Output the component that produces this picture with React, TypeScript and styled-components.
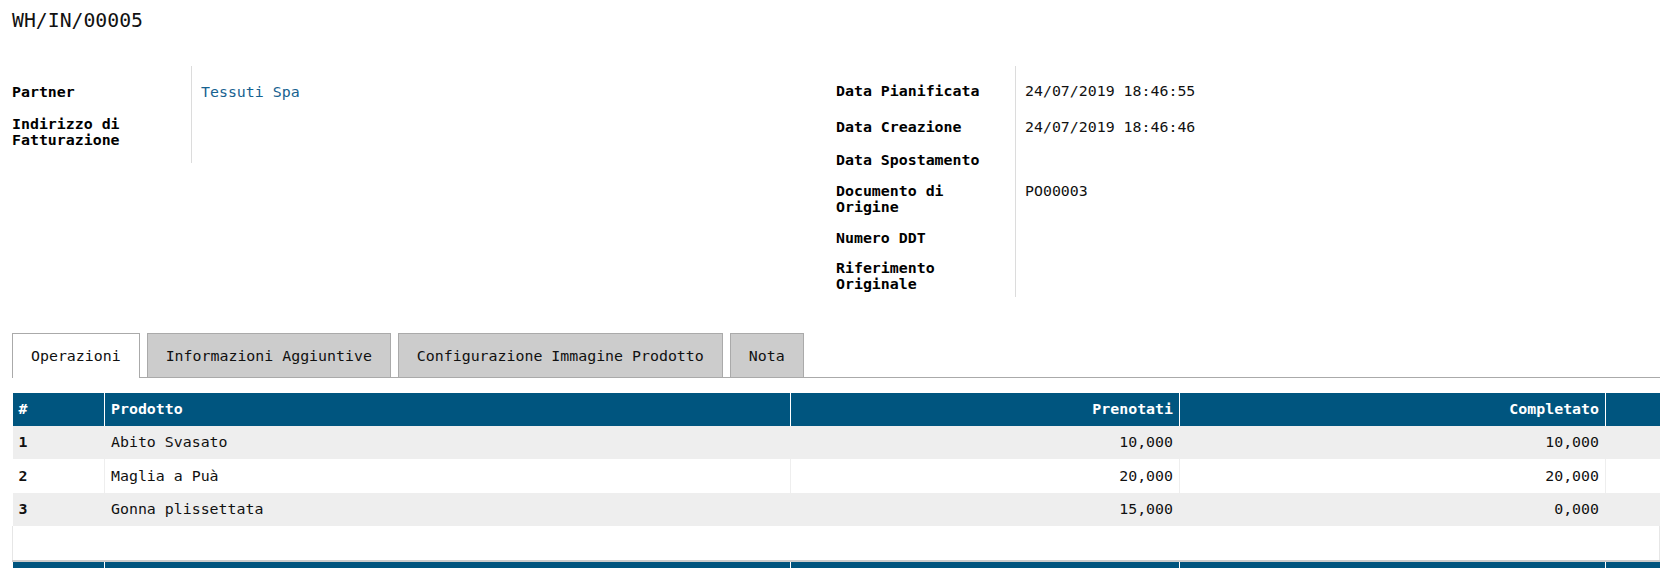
import React from "react";
import styled, { createGlobalStyle } from "styled-components";

const GlobalStyle = createGlobalStyle`
  html, body {
    margin: 0;
    padding: 0;
    overflow: hidden;
    background: #ffffff;
  }
  body {
    font-family: "DejaVu Sans Mono", "Liberation Mono", monospace;
    font-size: 14.9px;
    color: #111;
  }
`;

const Page = styled.div`
  padding: 9px 12px 0;
  width: 1648px;
`;

const Title = styled.h1`
  margin: 0;
  font-size: 19.8px;
  line-height: 24px;
  font-weight: normal;
  color: #111;
`;

const InfoGrid = styled.div`
  margin-top: 33px;
  display: grid;
  grid-template-columns: 1fr 1fr;
  align-items: start;
`;

const FieldGroup = styled.div`
  display: grid;
  grid-template-columns: 179px 1fr;
`;

const FieldLabel = styled.div<{ $pt: number; $pb?: number }>`
  padding-top: ${(p) => p.$pt}px;
  padding-bottom: ${(p) => p.$pb ?? 0}px;
  padding-right: 10px;
  line-height: 16px;
  font-weight: bold;
  color: #000;
`;

const FieldValue = styled.div<{ $pt: number; $pb?: number; $link?: boolean }>`
  padding-top: ${(p) => p.$pt}px;
  padding-bottom: ${(p) => p.$pb ?? 0}px;
  padding-left: 9px;
  border-left: 1px solid #dcdcdc;
  line-height: 16px;
  color: ${(p) => (p.$link ? "#176290" : "#111")};
`;

const TabBar = styled.div`
  margin-top: 36px;
  display: flex;
  align-items: flex-end;
  gap: 7px;
  border-bottom: 1px solid #aaaaaa;
`;

const Tab = styled.div<{ $active?: boolean }>`
  padding: 14px 18px ${(p) => (p.$active ? 13 : 12)}px;
  line-height: 17px;
  border: 1px solid #aaaaaa;
  border-bottom: none;
  margin-bottom: ${(p) => (p.$active ? -1 : 0)}px;
  background: ${(p) => (p.$active ? "#ffffff" : "#cccccc")};
  color: #111;
  white-space: nowrap;
`;

const Table = styled.table`
  margin-top: 15px;
  width: 1648px;
  table-layout: fixed;
  border-collapse: collapse;
`;

const HeadCell = styled.th<{ $right?: boolean }>`
  height: 33px;
  padding: 0 6px;
  background: #00557f;
  color: #ffffff;
  font-weight: bold;
  text-align: ${(p) => (p.$right ? "right" : "left")};
  border-left: 1px solid #ffffff;
  &:first-child {
    border-left: none;
  }
`;

const BodyRow = styled.tr<{ $odd?: boolean }>`
  background: ${(p) => (p.$odd ? "#eeeeee" : "#ffffff")};
`;

const BodyCell = styled.td<{ $right?: boolean; $bold?: boolean }>`
  height: 33.5px;
  padding: 0 6px;
  text-align: ${(p) => (p.$right ? "right" : "left")};
  font-weight: ${(p) => (p.$bold ? "bold" : "normal")};
  color: #111;
  border-left: 1px solid #eeeeee;
  white-space: nowrap;
  &:first-child {
    border-left: none;
  }
`;

const EmptyCell = styled.td`
  height: 33.5px;
  padding: 0;
  background: #ffffff;
  border-left: 1px solid #e6e6e6;
  border-right: 1px solid #e6e6e6;
`;

const FootRow = styled.tr`
  border-top: 2px solid #cccccc;
`;

const FootCell = styled.td`
  height: 33px;
  padding: 0 6px;
  background: #00557f;
  border-left: 1px solid #ffffff;
  &:first-child {
    border-left: none;
  }
`;

const leftFields = [
  { label: "Partner", value: "Tessuti Spa", link: true, pt: 17.5 },
  { label: "Indirizzo di Fatturazione", value: "", pt: 16.3, pb: 15 },
];

const rightFields = [
  { label: "Data Pianificata", value: "24/07/2019 18:46:55", pt: 16.8 },
  { label: "Data Creazione", value: "24/07/2019 18:46:46", pt: 20 },
  { label: "Data Spostamento", value: "", pt: 17.3 },
  { label: "Documento di Origine", value: "PO00003", pt: 15.4 },
  { label: "Numero DDT", value: "", pt: 14.3 },
  { label: "Riferimento Originale", value: "", pt: 14.3, pb: 4.6 },
];

const rows = [
  { n: "1", name: "Abito Svasato", res: "10,000", done: "10,000" },
  { n: "2", name: "Maglia a Puà", res: "20,000", done: "20,000" },
  { n: "3", name: "Gonna plissettata", res: "15,000", done: "0,000" },
];

type Field = { label: string; value: string; link?: boolean; pt: number; pb?: number };

const Fields: React.FC<{ items: Field[] }> = ({ items }) => (
  <FieldGroup>
    {items.map((f) => (
      <React.Fragment key={f.label}>
        <FieldLabel $pt={f.pt} $pb={f.pb}>
          {f.label}
        </FieldLabel>
        <FieldValue $pt={f.pt} $pb={f.pb} $link={f.link}>
          {f.value}
        </FieldValue>
      </React.Fragment>
    ))}
  </FieldGroup>
);

export default function App() {
  return (
    <>
      <GlobalStyle />
      <Page>
        <Title>WH/IN/00005</Title>
        <InfoGrid>
          <Fields items={leftFields} />
          <Fields items={rightFields} />
        </InfoGrid>
        <TabBar>
          <Tab $active>Operazioni</Tab>
          <Tab>Informazioni Aggiuntive</Tab>
          <Tab>Configurazione Immagine Prodotto</Tab>
          <Tab>Nota</Tab>
        </TabBar>
        <Table>
          <colgroup>
            <col style={{ width: 92 }} />
            <col style={{ width: 686 }} />
            <col style={{ width: 389 }} />
            <col style={{ width: 426 }} />
            <col />
          </colgroup>
          <thead>
            <tr>
              <HeadCell>#</HeadCell>
              <HeadCell>Prodotto</HeadCell>
              <HeadCell $right>Prenotati</HeadCell>
              <HeadCell $right>Completato</HeadCell>
              <HeadCell />
            </tr>
          </thead>
          <tbody>
            {rows.map((r, i) => (
              <BodyRow key={r.n} $odd={i % 2 === 0}>
                <BodyCell $bold>{r.n}</BodyCell>
                <BodyCell>{r.name}</BodyCell>
                <BodyCell $right>{r.res}</BodyCell>
                <BodyCell $right>{r.done}</BodyCell>
                <BodyCell />
              </BodyRow>
            ))}
            <tr>
              <EmptyCell colSpan={5} />
            </tr>
          </tbody>
          <tfoot>
            <FootRow>
              <FootCell />
              <FootCell />
              <FootCell />
              <FootCell />
              <FootCell />
            </FootRow>
          </tfoot>
        </Table>
      </Page>
    </>
  );
}
